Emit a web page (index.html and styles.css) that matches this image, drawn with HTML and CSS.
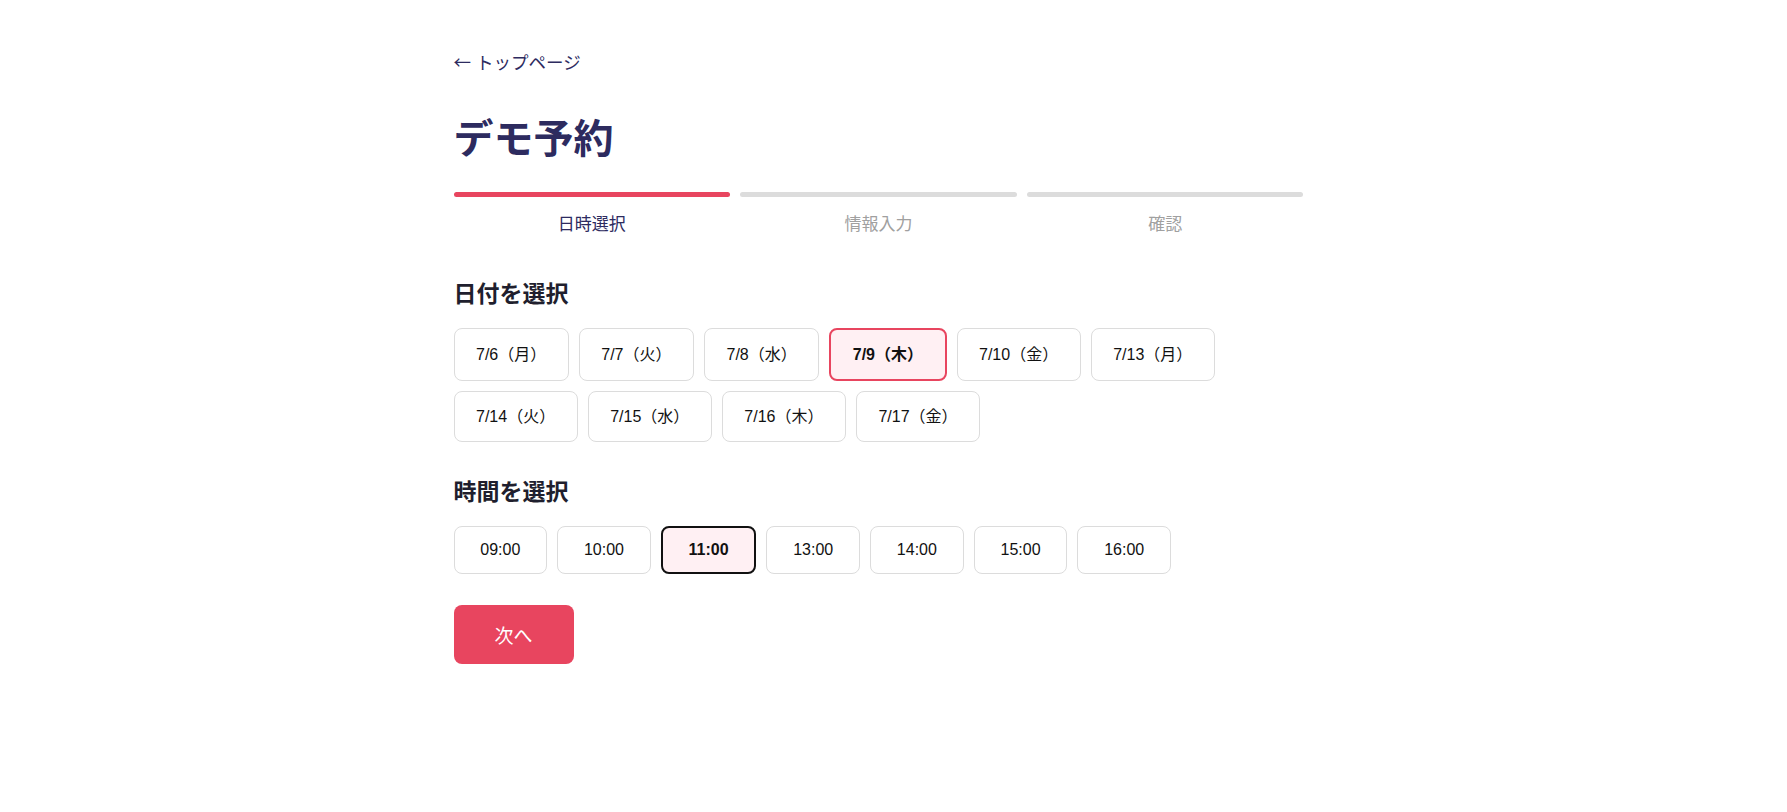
FILE: index.html
```html
<!DOCTYPE html>
<html lang="ja">
<head>
<meta charset="utf-8">
<title>デモ予約</title>
<link rel="stylesheet" href="styles.css">
</head>
<body>
<main class="page">
  <a class="back-link" href="#"><span class="back-arrow">←</span>トップページ</a>
  <h1 class="title">デモ予約</h1>

  <div class="steps">
    <div class="step step-active">
      <div class="step-bar"></div>
      <div class="step-label">日時選択</div>
    </div>
    <div class="step">
      <div class="step-bar"></div>
      <div class="step-label">情報入力</div>
    </div>
    <div class="step">
      <div class="step-bar"></div>
      <div class="step-label">確認</div>
    </div>
  </div>

  <section class="section">
    <h2 class="section-title">日付を選択</h2>
    <div class="options">
      <button class="opt opt-date">7/6（月）</button>
      <button class="opt opt-date">7/7（火）</button>
      <button class="opt opt-date">7/8（水）</button>
      <button class="opt opt-date opt-date-selected">7/9（木）</button>
      <button class="opt opt-date">7/10（金）</button>
      <button class="opt opt-date">7/13（月）</button>
      <button class="opt opt-date">7/14（火）</button>
      <button class="opt opt-date">7/15（水）</button>
      <button class="opt opt-date">7/16（木）</button>
      <button class="opt opt-date">7/17（金）</button>
    </div>
  </section>

  <section class="section section-time">
    <h2 class="section-title">時間を選択</h2>
    <div class="options">
      <button class="opt opt-time">09:00</button>
      <button class="opt opt-time">10:00</button>
      <button class="opt opt-time opt-time-selected">11:00</button>
      <button class="opt opt-time">13:00</button>
      <button class="opt opt-time">14:00</button>
      <button class="opt opt-time">15:00</button>
      <button class="opt opt-time">16:00</button>
    </div>
  </section>

  <button class="next-btn">次へ</button>
</main>
</body>
</html>
```

FILE: styles.css
```css
* {
  box-sizing: border-box;
}

html, body {
  margin: 0;
  background: #ffffff;
}

body {
  padding-right: 30px;
  font-family: "Liberation Sans", "Noto Sans CJK JP", sans-serif;
  color: #1f1f2e;
}

.page {
  max-width: 850px;
  margin: 0 auto;
  padding-top: 50px;
  display: flex;
  flex-direction: column;
  align-items: flex-start;
}

.back-link {
  display: block;
  height: 24px;
  font-family: "Noto Sans CJK JP", sans-serif;
  font-size: 17.5px;
  line-height: 24px;
  color: #2d2b5f;
  text-decoration: none;
}

.back-arrow {
  margin-right: 5px;
}

.title {
  margin: 38px 0 0;
  font-size: 40px;
  line-height: 48px;
  font-weight: 700;
  color: #2d2b5f;
  font-family: "Noto Sans CJK JP", sans-serif;
}

.steps {
  align-self: stretch;
  display: grid;
  grid-template-columns: repeat(3, 1fr);
  gap: 10px;
  margin-top: 32px;
}

.step-bar {
  height: 5px;
  border-radius: 3px;
  background: #dcdcdc;
}

.step-active .step-bar {
  background: #e8455f;
}

.step-label {
  margin-top: 14px;
  text-align: center;
  font-size: 17px;
  line-height: 24px;
  color: #a0a0a0;
  font-family: "Noto Sans CJK JP", sans-serif;
}

.step-active .step-label {
  color: #2d2b5f;
}

.section {
  margin-top: 41px;
  align-self: stretch;
}

.section-time {
  margin-top: 32px;
}

.section-title {
  margin: 0;
  font-size: 23px;
  line-height: 32px;
  font-weight: 700;
  color: #1f1f2e;
  font-family: "Noto Sans CJK JP", sans-serif;
}

.options {
  display: flex;
  flex-wrap: wrap;
  gap: 10px;
  margin-top: 20px;
}

.opt {
  font-family: "Liberation Sans", "Noto Sans CJK JP", sans-serif;
  font-size: 16px;
  color: #111111;
  background: #ffffff;
  border: 1px solid #dcdcdc;
  border-radius: 8px;
  cursor: pointer;
  margin: 0;
}

.opt-date {
  padding: 13px 21.5px;
  line-height: 23px;
}

.opt-time {
  padding: 11px 25.8px;
  line-height: 22px;
}

.opt-date-selected {
  border: 2px solid #e8455f;
  background: #fff0f3;
  font-weight: 700;
}

.opt-time-selected {
  border: 2px solid #111111;
  background: #fff0f3;
  font-weight: 700;
}

.next-btn {
  margin-top: 31px;
  padding: 16px 41px;
  font-size: 19px;
  line-height: 27px;
  color: #ffffff;
  background: #e8455f;
  border: none;
  border-radius: 8px;
  font-family: "Noto Sans CJK JP", sans-serif;
  cursor: pointer;
}
```
